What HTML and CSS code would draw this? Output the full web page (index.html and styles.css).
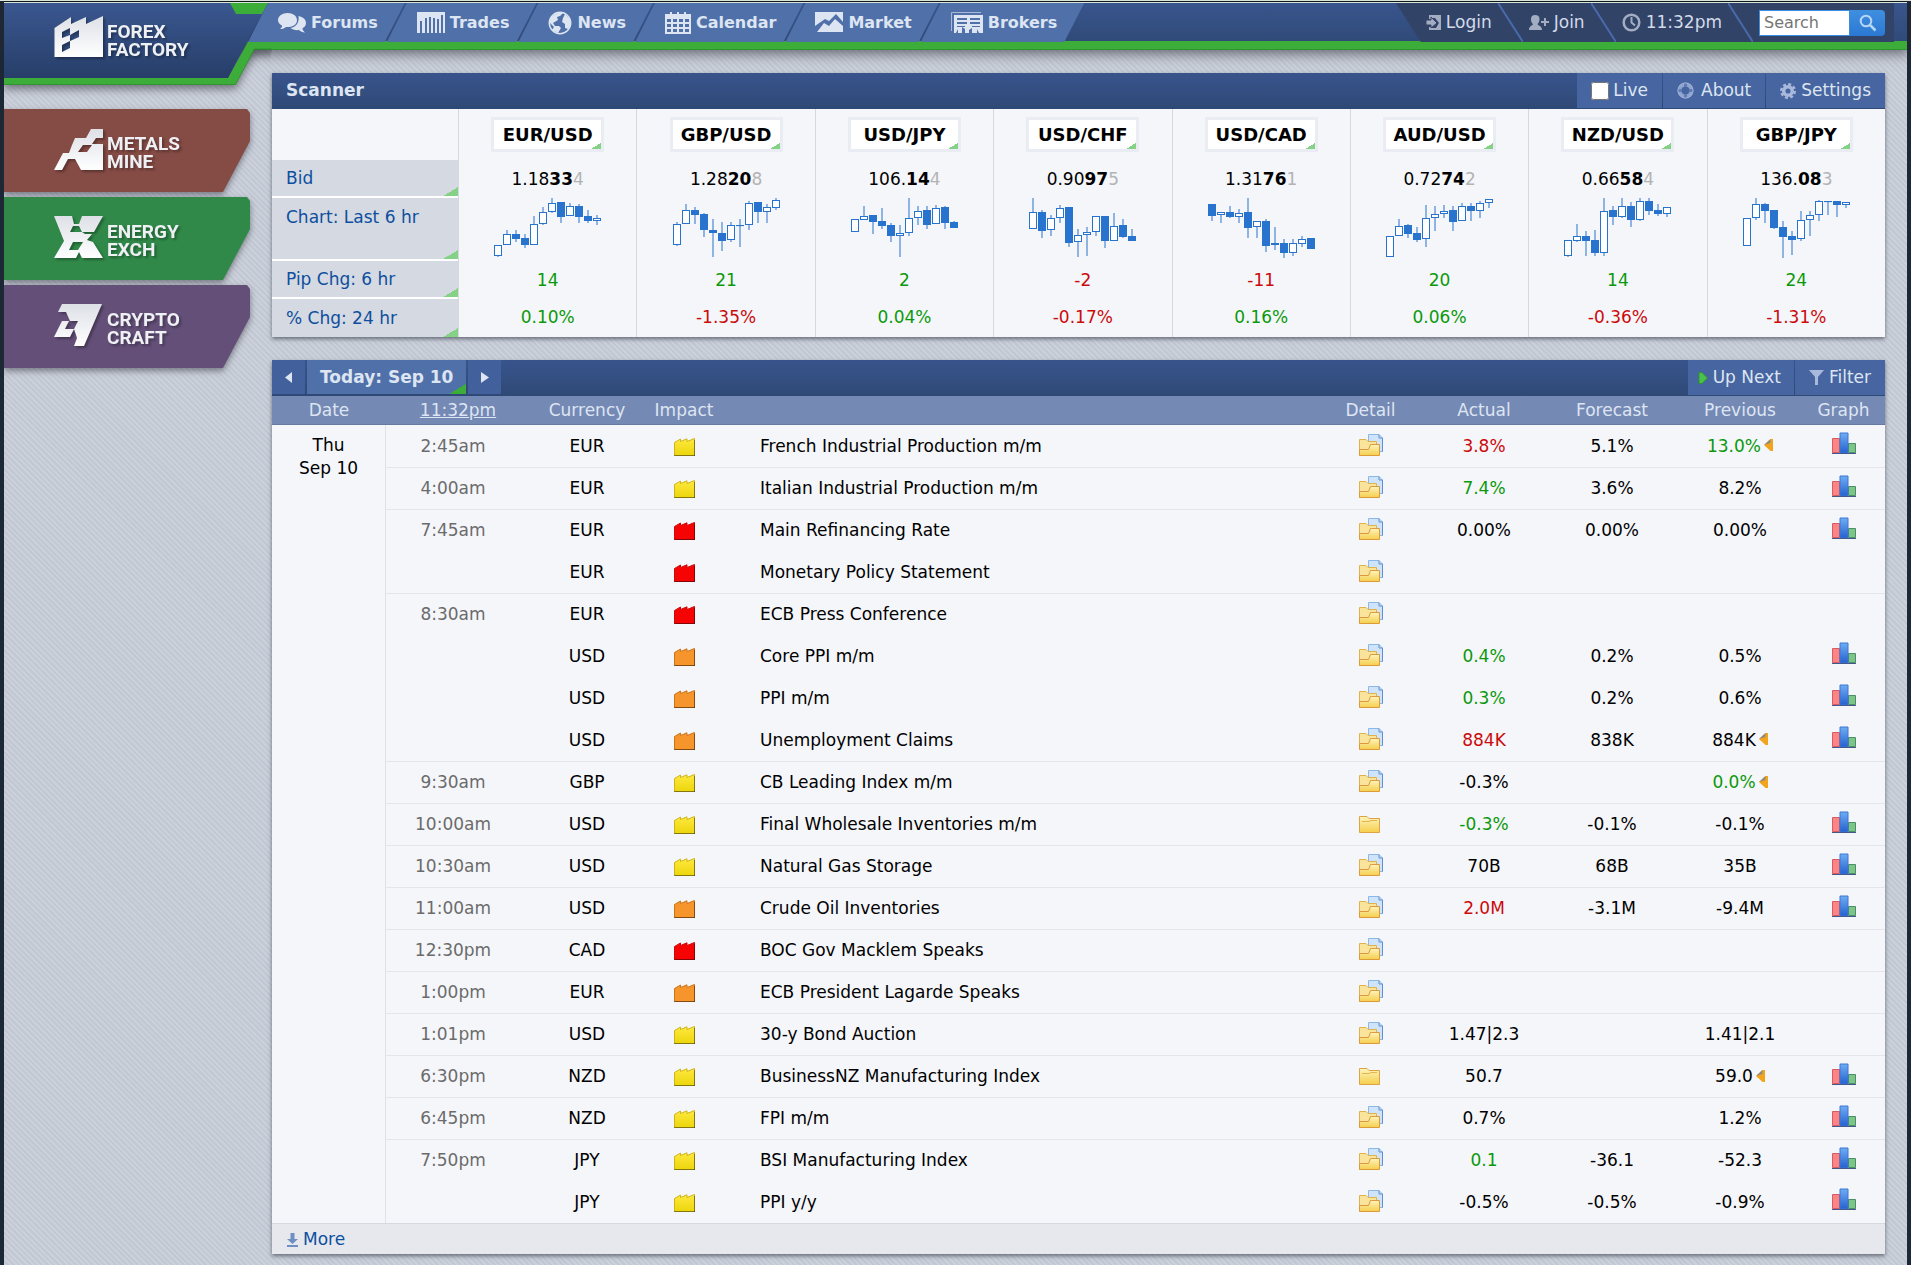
FILE: index.html
```html
<!DOCTYPE html>
<html lang="en">
<head>
<meta charset="utf-8">
<title>Forex Factory</title>
<meta name="viewport" content="width=device-width, initial-scale=1">
<link rel="stylesheet" href="styles.css">
</head>
<body>
<svg class="sprite" aria-hidden="true">
  <defs>
    <linearGradient id="g-silver" x1="0" y1="0" x2="0" y2="1"><stop offset="0" stop-color="#dde0e6"/><stop offset="1" stop-color="#fff"/></linearGradient>
    <linearGradient id="g-logo" x1="0" y1="0" x2="0" y2="1"><stop offset="0" stop-color="#3a5790"/><stop offset="1" stop-color="#273e68"/></linearGradient>
    <linearGradient id="g-yellow" x1="0" y1="0" x2="0" y2="1"><stop offset="0" stop-color="#ffe840"/><stop offset="1" stop-color="#ecd60c"/></linearGradient>
    <linearGradient id="g-folder" x1="0" y1="0" x2="0" y2="1"><stop offset="0" stop-color="#fdf3bc"/><stop offset="1" stop-color="#f5ce4c"/></linearGradient>
    <linearGradient id="g-blue" x1="0" y1="0" x2="0" y2="1"><stop offset="0" stop-color="#6fadf2"/><stop offset="1" stop-color="#2560d0"/></linearGradient>
    <symbol id="factory" viewBox="0 0 21 18">
      <path d="M.5 17.500V4.500L6.500 1V3.500L13 .8V3.500L20.500.5V17.500Z" stroke-width="1"/>
      <path d="M0 17.500H21M20.500 2V18" stroke="#000" stroke-opacity=".35" fill="none"/>
    </symbol>
    <symbol id="folder-open" viewBox="0 0 24 22">
      <path d="M9.500 .5H20L23.500 4V17.500H9.500Z" fill="#cfe4fa" stroke="#8ab8ea"/>
      <path d="M20 .5V4H23.500V17.500" fill="none" stroke="#5f8fd0"/>
      <path d="M.5 21.500V5.500H7L9 7.500H17.500V13" fill="#fae39a" stroke="#e0b34a"/>
      <path d="M.5 21.500V15.500H9.500L11.500 10.500H20.500V21.500Z" fill="url(#g-folder)" stroke="#dc9a3c"/>
    </symbol>
    <symbol id="folder" viewBox="0 0 24 22">
      <path d="M.5 20.500V4.500H8L10 6.500H20.500V20.500Z" fill="url(#g-folder)" stroke="#dca542"/>
      <path d="M3 9.500H10L12 8.500H18" fill="none" stroke="#e3b650"/>
    </symbol>
    <symbol id="bars" viewBox="0 0 24 22">
      <path d="M.5 6.500H7.500V20.500H.5Z" fill="#fb8484" stroke="#d85a62"/>
      <path d="M16.500 11.500H23.500V20.500H16.500Z" fill="#7cc488" stroke="#4a8f66"/>
      <path d="M8 1H16V21H8Z" fill="url(#g-blue)" stroke="#3b76d4"/>
      <path d="M0 21.500H24" stroke="#44588c"/>
    </symbol>
    <symbol id="revised" viewBox="0 0 9 12"><path d="M0 6 6.500 0H9V12H6.500Z" fill="#f2a51c"/><path d="M0 6 6.500 0V4Z" fill="#8d8a80"/></symbol>
  </defs>
</svg>

<div class="page">
  <header class="top">
    <a class="logo" href="#" aria-label="Forex Factory">
      <svg class="logo-shape" viewBox="0 0 268 82" width="268" height="82" aria-hidden="true">
        <path d="M0 75H224L244 39H268V46H250L231 82H0Z" fill="#3bad38"/>
        <path d="M0 81.500H231.500L250.500 46H268" fill="none" stroke="#2f9430"/>
        <path d="M0 0H264L224 75H0Z" fill="url(#g-logo)"/>
        <path d="M226 0H264L258 11H232Z" fill="#3bad38"/>
      </svg>
      <span class="brand">
        <svg width="50" height="43" viewBox="0 0 50 43" aria-hidden="true"><path fill="url(#g-silver)" fill-rule="evenodd" d="M.5 12 17 1V8L32 1V8L49 0V41H.5ZM8 16V22L16 19V25L8 29V36L16 32V25L25 21V14L16 19V12Z"/></svg>
        <span>FOREX<br>FACTORY</span>
      </span>
    </a>
    <nav class="main-nav" aria-label="Main">
      <a href="#"><svg width="28" height="20" viewBox="0 0 28 20"><path fill="#dde5f2" d="M9.500 0C15 0 19 3 19 7.200S15 14 9.500 14L8 13.900C6 15.500 4 16 2 16 3.500 15 4 14 4 12.500 1.500 11.300 0 9.300 0 7 0 3 4.500 0 9.500 0ZM20.500 3C25 4 28 6.500 28 10 28 12.500 26.500 14.200 24.500 15.300 24.500 17 25.500 18.500 27 19.500 24.500 19.500 22.300 18.500 21 17 17.500 17.500 14 16.500 12.500 15 18 14 21.500 10 20.500 3Z"/></svg>Forums</a>
      <a href="#"><svg width="28" height="22" viewBox="0 0 28 22"><path fill="#dde5f2" fill-rule="evenodd" d="M0 0H28V21H26V3H24V21H22V7H20V21H18V6H16V21H14V5H12V21H10V6H8V21H5V9H3V21H0Z"/></svg>Trades</a>
      <a href="#"><svg width="24" height="24" viewBox="0 0 24 24"><circle cx="12" cy="12" r="10.700" fill="none" stroke="#dde5f2" stroke-width="1.500"/><path fill="#dde5f2" d="M10 1.500 15 2 12 5 9 6 10 9 5 12 7 15 11 15 13 17 10 22 4 19 6 16 2 12 2 7 6 4ZM17 3 22 8 23 14 20 18 17 17 17 13 14 11 15 7Z"/></svg>News</a>
      <a href="#"><svg width="26" height="22" viewBox="0 0 26 22"><path fill="#dde5f2" fill-rule="evenodd" d="M0 2H5V0H7V2H12V0H14V2H19V0H21V2H26V22H0ZM2 7V10H6V7ZM8 7V10H12V7ZM14 7V10H18V7ZM20 7V10H24V7ZM2 12V15H6V12ZM8 12V15H12V12ZM14 12V15H18V12ZM20 12V15H24V12ZM2 17V20H6V17ZM8 17V20H12V17ZM14 17V20H18V17ZM20 17V20H24V17Z"/></svg>Calendar</a>
      <a href="#"><svg width="28" height="21" viewBox="0 0 28 21"><path fill="#dde5f2" d="M0 0H28V10L21 2 14 9 10 7 0 14ZM2 20 9 11 14 14 20 7 28 14V20Z"/></svg>Market</a>
      <a href="#"><svg width="32" height="22" viewBox="0 0 32 22"><path fill="none" stroke="#a9b9d8" d="M.5 19V.5H30"/><path fill="#dde5f2" fill-rule="evenodd" d="M3 3H32V21H28L26 17V21H21V16L18 18V21H14V17L11 15V21H7V17L5 21H3ZM6 6V8H16V6ZM19 6V8H29V6ZM6 10V12H16V10ZM19 10V12H29V10ZM6 14V15H14V14ZM21 14V15H29V14Z"/></svg>Brokers</a>
    </nav>
    <div class="user-nav">
      <a href="#"><svg width="15" height="16" viewBox="0 0 15 16"><path fill="#a3adc2" fill-rule="evenodd" d="M3 0H15V15H3V12H5V13H10L13 8 9 3H5V4H3Z"/><path fill="#a3adc2" d="M0 5H5V2L11 8 5 13V10H0Z" stroke="#324368"/></svg>Login</a>
      <svg class="slash" width="25" height="39" viewBox="0 0 25 39"><path d="M0 0 25 39" stroke="#4a6bab" stroke-width="2"/></svg>
      <a href="#"><svg width="20" height="16" viewBox="0 0 20 16"><path fill="#a3adc2" d="M6 0C9 0 10.500 1.500 10.500 4 10.500 6.500 9.500 8 8.500 9 9 11 13 10.500 13 15H0C0 10.500 3.500 11 4 9 2.500 8 2 6.500 2 4 2 1.500 3.500 0 6 0ZM15 3H17V6H20V8H17V11H15V8H12V6H15Z"/></svg>Join</a>
      <svg class="slash" width="25" height="39" viewBox="0 0 25 39"><path d="M0 0 25 39" stroke="#4a6bab" stroke-width="2"/></svg>
      <a href="#"><svg width="19" height="19" viewBox="0 0 19 19"><circle cx="9.500" cy="9.500" r="7.800" fill="none" stroke="#a3adc2" stroke-width="2.500"/><path d="M9.500 4V9.500L13 12.500" fill="none" stroke="#a3adc2" stroke-width="2"/></svg>11:32pm</a>
      <svg class="slash" width="25" height="39" viewBox="0 0 25 39"><path d="M0 0 25 39" stroke="#4a6bab" stroke-width="2"/></svg>
      <form class="search" role="search">
        <input type="search" placeholder="Search" aria-label="Search">
        <button type="button" aria-label="Go"><svg width="18" height="18" viewBox="0 0 18 18"><circle cx="7" cy="7" r="5.300" fill="none" stroke="#b5d6f5" stroke-width="2"/><path d="M11 11 16.500 16.500" stroke="#b5d6f5" stroke-width="2.500"/></svg></button>
      </form>
    </div>
  </header>

  <div class="body">
    <aside class="sites">
      <div class="site-wrap"><a class="site metals" href="#"><span class="brand">
        <svg width="50" height="43" viewBox="0 0 50 43" aria-hidden="true"><path fill="url(#g-silver)" fill-rule="evenodd" d="M37 1H49V10H42L38 16H49V42H27L21 31H14L8 42H0L9 25H15L18 17 21 10H32ZM29 17 24 24H33L38 17Z"/></svg>
        <span>METALS<br>MINE</span></span></a></div>
      <div class="site-wrap"><a class="site energy" href="#"><span class="brand">
        <svg width="50" height="43" viewBox="0 0 50 43" aria-hidden="true"><path fill="url(#g-silver)" fill-rule="evenodd" d="M0 0H18L20 8H25L28 0H49L40 16H28L25 10H19L16 16H28L31 18H38L33 24 39 26 49 42H28L25 36 22 42H0L10 25ZM19 26 15 34H24L29 26Z"/></svg>
        <span>ENERGY<br>EXCH</span></span></a></div>
      <div class="site-wrap"><a class="site crypto" href="#"><span class="brand">
        <svg width="50" height="43" viewBox="0 0 50 43" aria-hidden="true"><path fill="url(#g-silver)" fill-rule="evenodd" d="M8 0H48L30 42H20L23 34 20 25 16 33H0L8 17H16L12 8H4ZM15 17 11 25H20L24 17Z"/></svg>
        <span>CRYPTO<br>CRAFT</span></span></a></div>
    </aside>

    <main>
      <section class="panel">
        <div class="panel-head">
          <h2>Scanner</h2>
          <div class="tools">
            <label><input type="checkbox">Live</label>
            <a href="#" class="about"><svg width="17" height="17" viewBox="0 0 17 17"><circle cx="8.500" cy="8.500" r="6" fill="none" stroke="#8fa4d0" stroke-width="4"/><path d="M8.500 0V5M8.500 12V17M0 8.500H5M12 8.500H17" stroke="#5f7bb4" stroke-width="3"/><circle cx="8.500" cy="8.500" r="7.500" fill="none" stroke="#a0b2d8"/></svg>About</a>
            <a href="#"><svg width="16" height="16" viewBox="0 0 16 16"><circle cx="8" cy="8" r="4.300" fill="none" stroke="#a9b9dc" stroke-width="3.500"/><circle cx="8" cy="8" r="6.800" fill="none" stroke="#a9b9dc" stroke-width="2.400" stroke-dasharray="3 2.340"/></svg>Settings</a>
          </div>
        </div>
        <table class="scanner">
          <thead>
            <tr><td></td>
              <th scope="col"><button type="button">EUR/USD</button></th><th scope="col"><button type="button">GBP/USD</button></th><th scope="col"><button type="button">USD/JPY</button></th><th scope="col"><button type="button">USD/CHF</button></th><th scope="col"><button type="button">USD/CAD</button></th><th scope="col"><button type="button">AUD/USD</button></th><th scope="col"><button type="button">NZD/USD</button></th><th scope="col"><button type="button">GBP/JPY</button></th></tr>
          </thead>
          <tbody>
            <tr><th scope="row"><a href="#">Bid</a></th>
              <td>1.18<b>33</b><i>4</i></td><td>1.28<b>20</b><i>8</i></td><td>106.<b>14</b><i>4</i></td><td>0.90<b>97</b><i>5</i></td><td>1.31<b>76</b><i>1</i></td><td>0.72<b>74</b><i>2</i></td><td>0.66<b>58</b><i>4</i></td><td>136.<b>08</b><i>3</i></td></tr>
            <tr class="charts"><th scope="row"><a href="#">Chart: Last 6 hr</a></th>
              <td><svg class="chart" data-candles="H47,47,58,59 H32,36,47,47 F32,36,41,44 F36,40,47,50 H18,26,47,47 H9,14,26,27 H0,5,14,15 F4,4,19,25 H5,8,18,18 F6,8,19,25 F12,18,23,25 H17,20,23,27"></svg></td>
              <td><svg class="chart" data-candles="H24,26,47,48 H6,12,26,26 F9,12,17,26 F15,16,32,39 F21,32,35,59 F24,35,43,53 H24,27,42,44 F21,27,28,49 H3,5,27,32 F4,4,14,25 H6,9,14,25 H0,2,10,12"></svg></td>
              <td><svg class="chart" data-candles="H21,21,34,34 H8,18,22,22 F17,17,24,36 F10,23,28,31 F25,27,38,44 H27,35,38,59 H0,20,35,38 H8,13,20,27 F8,12,27,31 H7,10,26,26 F8,9,25,31 F23,24,30,30"></svg></td>
              <td><svg class="chart" data-candles="H0,14,31,31 F12,14,33,40 H17,20,32,38 H7,10,20,25 F9,9,45,49 H31,37,44,59 H29,34,37,58 H18,18,34,38 F18,18,43,50 H15,28,43,43 F21,27,39,40 F31,38,43,43"></svg></td>
              <td><svg class="chart" data-candles="F6,6,18,23 H14,14,17,25 F8,14,19,20 H11,15,19,25 F0,14,30,40 H23,23,29,40 F21,23,48,54 F29,45,47,52 F41,45,55,60 H41,45,55,58 H38,41,46,49 F40,40,51,51"></svg></td>
              <td><svg class="chart" data-candles="H38,38,59,59 H21,28,38,38 F26,27,36,40 F29,35,42,44 H7,20,41,49 H8,16,20,33 H7,13,16,20 F8,12,24,33 H5,8,23,23 F5,8,13,23 H3,5,13,20 H1,1,5,10"></svg></td>
              <td><svg class="chart" data-candles="H42,42,58,59 H26,38,43,44 F33,38,43,58 F32,42,55,58 H0,13,55,58 F8,12,19,27 H0,8,19,20 F4,8,22,29 H0,3,22,23 F0,3,13,17 F6,12,16,18 H9,9,16,19"></svg></td>
              <td><svg class="chart" data-candles="H20,20,48,48 H0,6,20,22 F5,6,13,25 F12,12,30,31 F23,29,39,60 F33,38,42,57 H13,22,41,43 H13,17,22,38 H2,3,17,23 F3,3,4,17 F3,3,7,19 H4,4,7,10"></svg></td></tr>
            <tr><th scope="row"><a href="#">Pip Chg: 6 hr</a></th>
              <td class="up">14</td><td class="up">21</td><td class="up">2</td><td class="down">-2</td><td class="down">-11</td><td class="up">20</td><td class="up">14</td><td class="up">24</td></tr>
            <tr><th scope="row"><a href="#">% Chg: 24 hr</a></th>
              <td class="up">0.10%</td><td class="down">-1.35%</td><td class="up">0.04%</td><td class="down">-0.17%</td><td class="up">0.16%</td><td class="up">0.06%</td><td class="down">-0.36%</td><td class="down">-1.31%</td></tr>
          </tbody>
        </table>
      </section>

      <section class="panel">
        <div class="panel-head">
          <div class="day-nav">
            <button type="button" aria-label="Previous day"><svg width="7" height="11" viewBox="0 0 7 11"><path d="M7 0V11L0 5.500Z" fill="#dde5f2"/></svg></button>
            <button type="button" class="today">Today: Sep 10</button>
            <button type="button" aria-label="Next day"><svg width="8" height="11" viewBox="0 0 8 11"><path d="M0 0V11L8 5.500Z" fill="#dde5f2"/></svg></button>
          </div>
          <div class="tools">
            <a href="#" class="up-next"><svg width="10" height="12" viewBox="0 0 10 12"><path d="M1 .5H4L9.500 6 4 11.500H1Z" fill="#4cc04c" stroke="#2f9430"/></svg>Up Next</a>
            <a href="#"><svg width="15" height="15" viewBox="0 0 15 15"><path d="M0 0H15L9 7V15H6V7Z" fill="#a9b9dc"/></svg>Filter</a>
          </div>
        </div>
        <table class="calendar">
          <colgroup><col class="c-date"><col class="c-time"><col class="c-cur"><col class="c-impact"><col><col class="c-detail"><col class="c-actual"><col class="c-forecast"><col class="c-previous"><col class="c-graph"></colgroup>
          <thead>
            <tr><th>Date</th><th class="clock"><a href="#">11:32pm</a></th><th>Currency</th><th>Impact</th><th></th><th>Detail</th><th>Actual</th><th>Forecast</th><th>Previous</th><th class="last">Graph</th></tr>
          </thead>
          <tbody>
            <tr><td class="date" rowspan="19">Thu<br>Sep 10</td><td class="time">2:45am</td><td>EUR</td><td><svg class="low"><use href="#factory"/></svg></td><td class="event">French Industrial Production m/m</td><td><svg class="ico"><use href="#folder-open"/></svg></td><td class="down">3.8%</td><td>5.1%</td><td class="up">13.0%<svg class="rev"><use href="#revised"/></svg></td><td class="last"><svg class="ico graph"><use href="#bars"/></svg></td></tr>
            <tr class="new"><td class="time">4:00am</td><td>EUR</td><td><svg class="low"><use href="#factory"/></svg></td><td class="event">Italian Industrial Production m/m</td><td><svg class="ico"><use href="#folder-open"/></svg></td><td class="up">7.4%</td><td>3.6%</td><td>8.2%</td><td class="last"><svg class="ico graph"><use href="#bars"/></svg></td></tr>
            <tr class="new"><td class="time">7:45am</td><td>EUR</td><td><svg class="high"><use href="#factory"/></svg></td><td class="event">Main Refinancing Rate</td><td><svg class="ico"><use href="#folder-open"/></svg></td><td>0.00%</td><td>0.00%</td><td>0.00%</td><td class="last"><svg class="ico graph"><use href="#bars"/></svg></td></tr>
            <tr><td class="time"></td><td>EUR</td><td><svg class="high"><use href="#factory"/></svg></td><td class="event">Monetary Policy Statement</td><td><svg class="ico"><use href="#folder-open"/></svg></td><td></td><td></td><td></td><td></td></tr>
            <tr class="new"><td class="time">8:30am</td><td>EUR</td><td><svg class="high"><use href="#factory"/></svg></td><td class="event">ECB Press Conference</td><td><svg class="ico"><use href="#folder-open"/></svg></td><td></td><td></td><td></td><td></td></tr>
            <tr><td class="time"></td><td>USD</td><td><svg class="mid"><use href="#factory"/></svg></td><td class="event">Core PPI m/m</td><td><svg class="ico"><use href="#folder-open"/></svg></td><td class="up">0.4%</td><td>0.2%</td><td>0.5%</td><td class="last"><svg class="ico graph"><use href="#bars"/></svg></td></tr>
            <tr><td class="time"></td><td>USD</td><td><svg class="mid"><use href="#factory"/></svg></td><td class="event">PPI m/m</td><td><svg class="ico"><use href="#folder-open"/></svg></td><td class="up">0.3%</td><td>0.2%</td><td>0.6%</td><td class="last"><svg class="ico graph"><use href="#bars"/></svg></td></tr>
            <tr><td class="time"></td><td>USD</td><td><svg class="mid"><use href="#factory"/></svg></td><td class="event">Unemployment Claims</td><td><svg class="ico"><use href="#folder-open"/></svg></td><td class="down">884K</td><td>838K</td><td>884K<svg class="rev"><use href="#revised"/></svg></td><td class="last"><svg class="ico graph"><use href="#bars"/></svg></td></tr>
            <tr class="new"><td class="time">9:30am</td><td>GBP</td><td><svg class="low"><use href="#factory"/></svg></td><td class="event">CB Leading Index m/m</td><td><svg class="ico"><use href="#folder-open"/></svg></td><td>-0.3%</td><td></td><td class="up">0.0%<svg class="rev"><use href="#revised"/></svg></td><td></td></tr>
            <tr class="new"><td class="time">10:00am</td><td>USD</td><td><svg class="low"><use href="#factory"/></svg></td><td class="event">Final Wholesale Inventories m/m</td><td><svg class="ico"><use href="#folder"/></svg></td><td class="up">-0.3%</td><td>-0.1%</td><td>-0.1%</td><td class="last"><svg class="ico graph"><use href="#bars"/></svg></td></tr>
            <tr class="new"><td class="time">10:30am</td><td>USD</td><td><svg class="low"><use href="#factory"/></svg></td><td class="event">Natural Gas Storage</td><td><svg class="ico"><use href="#folder-open"/></svg></td><td>70B</td><td>68B</td><td>35B</td><td class="last"><svg class="ico graph"><use href="#bars"/></svg></td></tr>
            <tr class="new"><td class="time">11:00am</td><td>USD</td><td><svg class="mid"><use href="#factory"/></svg></td><td class="event">Crude Oil Inventories</td><td><svg class="ico"><use href="#folder-open"/></svg></td><td class="down">2.0M</td><td>-3.1M</td><td>-9.4M</td><td class="last"><svg class="ico graph"><use href="#bars"/></svg></td></tr>
            <tr class="new"><td class="time">12:30pm</td><td>CAD</td><td><svg class="high"><use href="#factory"/></svg></td><td class="event">BOC Gov Macklem Speaks</td><td><svg class="ico"><use href="#folder-open"/></svg></td><td></td><td></td><td></td><td></td></tr>
            <tr class="new"><td class="time">1:00pm</td><td>EUR</td><td><svg class="mid"><use href="#factory"/></svg></td><td class="event">ECB President Lagarde Speaks</td><td><svg class="ico"><use href="#folder-open"/></svg></td><td></td><td></td><td></td><td></td></tr>
            <tr class="new"><td class="time">1:01pm</td><td>USD</td><td><svg class="low"><use href="#factory"/></svg></td><td class="event">30-y Bond Auction</td><td><svg class="ico"><use href="#folder-open"/></svg></td><td>1.47|2.3</td><td></td><td>1.41|2.1</td><td></td></tr>
            <tr class="new"><td class="time">6:30pm</td><td>NZD</td><td><svg class="low"><use href="#factory"/></svg></td><td class="event">BusinessNZ Manufacturing Index</td><td><svg class="ico"><use href="#folder"/></svg></td><td>50.7</td><td></td><td>59.0<svg class="rev"><use href="#revised"/></svg></td><td class="last"><svg class="ico graph"><use href="#bars"/></svg></td></tr>
            <tr class="new"><td class="time">6:45pm</td><td>NZD</td><td><svg class="low"><use href="#factory"/></svg></td><td class="event">FPI m/m</td><td><svg class="ico"><use href="#folder-open"/></svg></td><td>0.7%</td><td></td><td>1.2%</td><td class="last"><svg class="ico graph"><use href="#bars"/></svg></td></tr>
            <tr class="new"><td class="time">7:50pm</td><td>JPY</td><td><svg class="low"><use href="#factory"/></svg></td><td class="event">BSI Manufacturing Index</td><td><svg class="ico"><use href="#folder-open"/></svg></td><td class="up">0.1</td><td>-36.1</td><td>-52.3</td><td class="last"><svg class="ico graph"><use href="#bars"/></svg></td></tr>
            <tr><td class="time"></td><td>JPY</td><td><svg class="low"><use href="#factory"/></svg></td><td class="event">PPI y/y</td><td><svg class="ico"><use href="#folder-open"/></svg></td><td>-0.5%</td><td>-0.5%</td><td>-0.9%</td><td class="last"><svg class="ico graph"><use href="#bars"/></svg></td></tr>
          </tbody>
        </table>
        <div class="panel-foot"><a href="#"><svg width="11" height="14" viewBox="0 0 11 14"><path d="M3.500 0H7.500V6H11L5.500 11 0 6H3.500ZM0 12H11V14H0Z" fill="#6f8fc0"/></svg>More</a></div>
      </section>
    </main>
  </div>
</div>
<script src="charts.js"></script>
</body>
</html>
```
FILE: styles.css
```css
* { box-sizing: border-box; }

body {
  margin: 0;
  background: #1d2836;
  border-top: 1px solid #d9e4dd;
  font: 17px/23px Verdana, "DejaVu Sans", sans-serif;
  color: #000;
}

a { color: inherit; text-decoration: none; }
button { font: inherit; border: 0; cursor: pointer; }
.sprite { position: absolute; width: 0; height: 0; }
svg { flex: none; }

.page {
  margin: 0 4px;
  border-top: 1px solid #0c1411;
  background: repeating-linear-gradient(45deg, #cbd0da 0 2px, #c2c8d3 2px 4px);
  min-height: calc(100vh - 1px);
}

/* Header */
.top {
  display: flex;
  height: 47px;
  background: linear-gradient(#38558d, #304a78);
  border-top: 1px solid #d9e4dd;
  border-bottom: 7px solid #3bad38;
  box-shadow: inset 0 -1px 0 #3bad38, 0 1px 0 #2f9430, 0 3px 12px 2px rgba(40, 40, 50, .6);
}

.logo { position: relative; z-index: 1; width: 244px; height: 82px; }
.logo-shape { position: absolute; left: 0; top: 0; filter: drop-shadow(0 4px 4px rgba(40, 40, 50, .55)); clip-path: polygon(0 0, 268px 0, 268px 46px, 260px 100px, 0 100px); }
.logo .brand { position: relative; padding-top: 13px; }

.brand {
  display: flex;
  gap: 3px;
  padding: 19px 0 0 50px;
  color: #eef0f4;
  font: 700 19px/18px Roboto, sans-serif;
  filter: drop-shadow(2px 2px 1px rgba(0, 0, 0, .3));
}
.brand > span { padding-top: 7px; }

.main-nav { display: flex; position: relative; z-index: 2; flex: none; }
.main-nav a {
  display: flex;
  align-items: center;
  gap: 5px;
  padding: 0 27px 0 30px;
  margin-left: -18px;
  height: 39px;
  background: #5070a9;
  color: #dde5f2;
  font-weight: 700;
  font-size: 16px;
  clip-path: polygon(20px 0, 100% 0, calc(100% - 20px) 100%, 0 100%);
}
.main-nav a:first-child { margin-left: 0; }

.user-nav {
  display: flex;
  gap: 6px;
  flex: none;
  height: 39px;
  margin: 0 13px 0 auto;
  padding: 0 9px 0 30px;
  background: #324368;
  color: #d3dae8;
  clip-path: polygon(0 0, 100% 0, 100% 100%, 25px 100%);
}
.user-nav a { display: flex; align-items: center; gap: 5px; }

.search { display: flex; align-items: center; margin: 0; }
.search input {
  width: 91px;
  height: 26px;
  padding: 0 4px;
  border: 1px solid #3a8de0;
  border-radius: 0;
  background: #fff;
  font: inherit;
  font-size: 16px;
}
.search input::placeholder { color: #757575; }
.search button {
  display: grid;
  place-items: center;
  width: 35px;
  height: 26px;
  padding: 0;
  border-radius: 0 4px 4px 0;
  background: linear-gradient(#3f8fe0, #2b78d2);
}

/* Layout */
.body { display: flex; }
.sites { flex: none; width: 268px; padding-top: 60px; display: flex; flex-direction: column; gap: 5px; }
main { flex: 1; min-width: 0; padding: 24px 22px 11px 0; display: flex; flex-direction: column; gap: 23px; }

.site-wrap { filter: drop-shadow(0 3px 3px rgba(40, 40, 50, .5)); }
.site {
  display: block;
  width: 246px;
  height: 83px;
  clip-path: polygon(0 0, 243px 0, 246px 4px, 246px 32px, 219px 100%, 0 100%);
}
.metals { background: #854b45; }
.energy { background: #308949; }
.crypto { background: #634f78; }

/* Panels */
.panel { background: #f5f6fa; box-shadow: 0 2px 4px rgba(40, 45, 60, .6); }
.panel-head {
  display: flex;
  justify-content: space-between;
  height: 36px;
  background: linear-gradient(#38548c, #2f4976);
}
.panel-head h2 { margin: 0; padding: 0 14px; font-size: 17px; line-height: 34px; color: #dde5f2; }
.tools { display: flex; gap: 1px; height: 35px; }
.tools > * {
  display: flex;
  align-items: center;
  gap: 5px;
  padding: 0 14px;
  background: #4765a0;
  color: #dde5f2;
}
.tools input { width: 18px; height: 18px; margin: 0; }
.tools label { gap: 4px; }
.tools .about { gap: 7px; }
.tools .up-next { gap: 5px; padding: 0 13px 0 10px; }

/* Scanner */
table { border-collapse: separate; border-spacing: 0; table-layout: fixed; width: 100%; }
th { font-weight: 400; }
td, th { padding: 0; text-align: center; }

.scanner thead td { width: 186px; height: 51px; }
.scanner td, .scanner thead th { border-left: 1px solid #d6d9e0; }
.scanner td:first-child { border-left: 0; }
.scanner thead button {
  display: block;
  width: 113px;
  height: 35px;
  margin: 0 auto;
  padding: 0;
  border: 3px solid #e9ecf2;
  background: linear-gradient(to bottom right, transparent 50%, #85d185 50%) right bottom / 10px 6px no-repeat #fff;
  font-weight: 700;
  font-size: 18px;
}
.scanner tbody th {
  height: 38px;
  padding-left: 14px;
  border-bottom: 2px solid #fff;
  background: linear-gradient(to bottom right, transparent 50%, #85d185 50%) right bottom / 15px 9px no-repeat #d5d9e2;
  color: #0d4f9e;
  text-align: left;
}
.scanner tbody tr:last-child th { border-bottom: 0; }
.scanner tbody tr:last-child td { padding-bottom: 2px; }
.scanner .charts th { height: 63px; padding-top: 8px; vertical-align: top; }
.scanner .charts td { vertical-align: top; }
.scanner i { font-style: normal; color: #b3b3b3; }
.chart { display: block; width: 107px; height: 60px; margin: 0 auto; }
.chart .wick { stroke: #2873cd; stroke-width: 1; }
.chart rect { stroke: #2873cd; }
.chart .fall { fill: #2873cd; }
.chart .rise { fill: #fff; }

.up { color: #0b990b; }
.down { color: #cb0a0a; }

/* Calendar */
.day-nav { display: flex; gap: 2px; height: 34px; }
.day-nav button {
  display: grid;
  place-items: center;
  width: 33px;
  padding: 0;
  background: #42609b;
}
.day-nav .today {
  width: auto;
  padding: 0 13px;
  background: linear-gradient(to bottom right, transparent 50%, #3bad38 50%) right bottom / 17px 10px no-repeat #5070a9;
  color: #dde5f2;
  font-weight: 700;
}

.c-date { width: 114px; }
.c-time, .c-cur { width: 134px; }
.c-impact { width: 60px; }
.c-detail { width: 91px; }
.c-actual, .c-previous { width: 136px; }
.c-forecast { width: 120px; }
.c-graph { width: 77px; }

.calendar thead th {
  height: 29px;
  background: #7589b5;
  border-bottom: 1px solid #66799f;
  color: #dde5f2;
}
.calendar .clock { padding-left: 10px; }
.calendar .last { padding-right: 6px; }
.clock a { text-decoration: underline; }
.calendar td { height: 42px; }
.calendar .new td { border-top: 1px solid #e4e6ea; }
.calendar .date { padding-top: 9px; border-right: 1px solid #e0e2e7; vertical-align: top; }
.time { color: #6b6b6b; }
.calendar .event { padding-left: 46px; text-align: left; }
.calendar td svg { vertical-align: middle; }
.low, .mid, .high { width: 21px; height: 18px; }
.low { fill: url(#g-yellow); stroke: #cdb614; }
.mid { fill: #f5952c; stroke: #cc7416; }
.high { fill: #f60404; stroke: #cc0808; }
.ico { width: 24px; height: 22px; margin-bottom: 3px; }
.ico.graph { margin-bottom: 6px; }
.rev { width: 9px; height: 12px; margin: -3px 0 0 3px; }

.panel-foot {
  height: 31px;
  padding: 4px 15px;
  background: #e6e8ee;
  border-top: 1px solid #d6d9df;
  color: #0d4f9e;
}
.panel-foot a { display: inline-flex; align-items: center; gap: 5px; }
```
FILE: charts.js
```javascript
// Each candle is "<H|F>high,open,close,low": H is a rising (hollow) body, F a falling (filled) one.
const NS = "http://www.w3.org/2000/svg";
const STEP = 9;

function add(svg, name, attrs) {
  const el = document.createElementNS(NS, name);
  for (const key in attrs) el.setAttribute(key, attrs[key]);
  svg.appendChild(el);
}

document.querySelectorAll(".chart").forEach(svg => {
  svg.setAttribute("viewBox", "0 0 107 60");
  svg.dataset.candles.split(" ").forEach((candle, i) => {
    const [high, top, bottom, low] = candle.slice(1).split(",").map(Number);
    const x = i * STEP;
    add(svg, "line", { class: "wick", x1: x + 4, x2: x + 4, y1: high, y2: low });
    add(svg, "rect", {
      class: candle[0] === "F" ? "fall" : "rise",
      x: x + 0.5, y: top + 0.5, width: 7, height: Math.max(bottom - top - 1, 0.1)
    });
  });
});
```
